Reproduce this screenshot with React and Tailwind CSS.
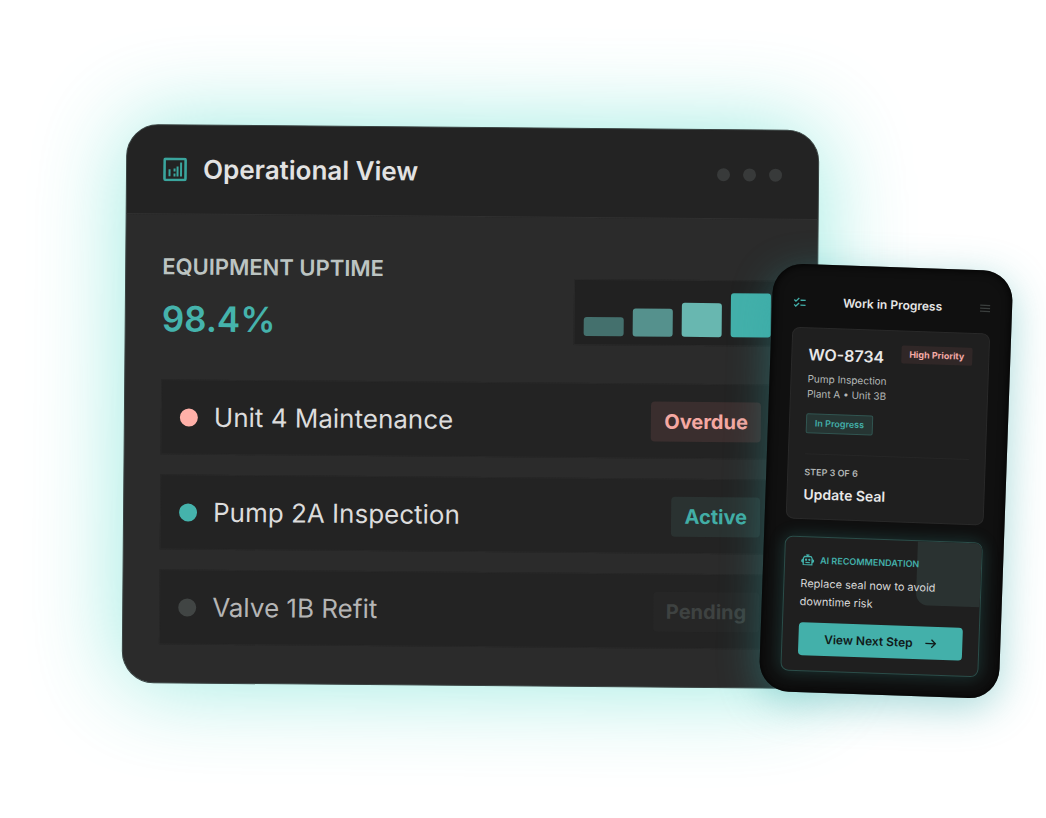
import React from 'react';

const UPTIME_BARS = [
  { id: 'q1', height: 19, tone: 'bg-[#44706d]' },
  { id: 'q2', height: 28, tone: 'bg-[#55918d]' },
  { id: 'q3', height: 34, tone: 'bg-[#68b7b0]' },
  { id: 'q4', height: 44, tone: 'bg-[#43b0aa]' },
];

const UNITS = [
  {
    name: 'Unit 4 Maintenance',
    status: 'Overdue',
    dot: 'bg-[#ffb0a8]',
    text: 'text-[#dcdcdc]',
    badge: 'bg-[#3a2e2e] text-[#f5a8a2]',
  },
  {
    name: 'Pump 2A Inspection',
    status: 'Active',
    dot: 'bg-[#45b3ac]',
    text: 'text-[#dcdcdc]',
    badge: 'bg-[#2a3231] text-[#42aea6]',
  },
  {
    name: 'Valve 1B Refit',
    status: 'Pending',
    dot: 'bg-[#414544]',
    text: 'text-[#b5b5b5]',
    badge: 'bg-[#262626] text-[#3e4241]',
  },
];

function AnalyticsIcon() {
  return (
    <svg viewBox="0 0 24 24" className="w-6 h-6 text-[#3aa59d]" fill="none" stroke="currentColor" strokeWidth="2">
      <rect x="1.5" y="1.5" width="21" height="21" rx="1" strokeWidth="2.6" />
      <path d="M6.5 12v7M11.5 16v3M11.5 11v3M14.5 9v10M18 5v14" />
    </svg>
  );
}

function ChecklistIcon() {
  return (
    <svg viewBox="0 0 24 24" className="w-[13px] h-[13px] text-[#43b0aa]" fill="none" stroke="currentColor" strokeWidth="2.4">
      <path d="M2 7l3 3 6-6M2 16l3 3 6-6M13.5 8H23M13.5 17H23" />
    </svg>
  );
}

function RobotIcon() {
  return (
    <svg viewBox="0 0 24 24" className="w-[13px] h-[13px] text-[#43b0aa]" fill="none" stroke="currentColor" strokeWidth="2.2">
      <path d="M6 6h12l2 3v12H4V9zM12 6V3M9 3h6M8 17h8" />
      <path d="M4 11L1 13v2l3 2M20 11l3 2v2l-3 2" fill="currentColor" />
      <circle cx="9" cy="12" r="1" fill="currentColor" />
      <circle cx="15" cy="12" r="1" fill="currentColor" />
    </svg>
  );
}

function OperationalCard() {
  return (
    <section className="rotate-[0.5deg] rounded-[32px] border border-[#3a4443] bg-[#2b2b2b] overflow-hidden shadow-[0_0_90px_rgba(45,212,191,0.48)]">
      {/* Header */}
      <header className="flex items-center justify-between h-[89px] px-9 bg-[#232323] border-b border-[#303030]">
        <div className="flex items-center gap-4">
          <AnalyticsIcon />
          <h1 className="text-[26px] leading-8 font-semibold text-[#e2e2e2]">Operational View</h1>
        </div>
        <div className="flex gap-[13px]">
          <span className="size-[13px] rounded-full bg-[#383a3a]" />
          <span className="size-[13px] rounded-full bg-[#383a3a]" />
          <span className="size-[13px] rounded-full bg-[#383a3a]" />
        </div>
      </header>

      <div className="px-9 pt-9 pb-[38px]">
        <div className="flex items-end justify-between">
          <div className="pb-1">
            <h2 className="text-[22px] leading-8 font-semibold text-[#bcc4c2]">EQUIPMENT UPTIME</h2>
            <p className="mt-4 text-[35px] leading-10 font-semibold text-[#45b3ac]">98.4%</p>
          </div>
          <div className="mb-px flex items-end gap-[9px] h-[66px] px-[9px] py-2 border border-[#292929] bg-[#212121]">
            {UPTIME_BARS.map((bar) => (
              <span key={bar.id} className={`w-10 rounded-[3px] ${bar.tone}`} style={{ height: bar.height }} />
            ))}
          </div>
        </div>

        {/* Unit list */}
        <ul className="mt-[37px] flex flex-col gap-5">
          {UNITS.map((unit) => (
            <li key={unit.name} className="flex items-center justify-between h-[75px] px-[18px] border border-[#282828] bg-[#232323]">
              <div className="flex items-center gap-4">
                <span className={`size-[18px] rounded-full ${unit.dot}`} />
                <span className={`text-[26px] leading-8 ${unit.text}`}>{unit.name}</span>
              </div>
              <span className={`px-[13px] text-[20px] leading-10 font-bold rounded-[4px] ${unit.badge}`}>{unit.status}</span>
            </li>
          ))}
        </ul>
      </div>
    </section>
  );
}

function PhoneCard() {
  return (
    <section className="absolute top-[267px] right-10 w-60 h-[428px] rotate-2 rounded-[30px] bg-[#101010] px-[21px] pt-5 shadow-[0_10px_40px_rgba(45,165,165,0.42),inset_0_0_10px_#000000]">
      <header className="flex items-center justify-between h-9">
        <ChecklistIcon />
        <h2 className="text-[12px] leading-4 font-semibold text-[#e6e6e6]">Work in Progress</h2>
        <button type="button" aria-label="Menu" className="text-[#3a3e3d]">
          <svg viewBox="0 0 12 12" className="size-3" fill="none" stroke="currentColor" strokeWidth="1.2">
            <path d="M1 3h10M1 6h10M1 9h10" />
          </svg>
        </button>
      </header>

      {/* Work order */}
      <article className="mt-[7px] h-[192px] rounded-lg border border-[#292929] bg-[#1f1f1f] px-4 pt-[14px]">
        <div className="flex items-start justify-between">
          <h3 className="text-[16px] leading-6 font-semibold text-[#e8e8e8]">WO-8734</h3>
          <span className="px-2 text-[9px] leading-[18px] font-bold rounded-[2px] bg-[#302727] text-[#f5aaa6]">High Priority</span>
        </div>
        <p className="mt-[5px] text-[10px] leading-[15px] text-[#b4b8b7]">
          Pump Inspection
          <br />
          Plant A • Unit 3B
        </p>
        <span className="mt-3 inline-block px-2 text-[9px] leading-[18px] font-semibold rounded-[2px] border border-[#315551] bg-[#263533] text-[#43b0aa]">
          In Progress
        </span>
        <div className="mt-5 pt-3 border-t border-[#262626]">
          <p className="text-[9px] leading-3 font-semibold text-[#b4b8b7]">STEP 3 OF 6</p>
          <p className="mt-[6px] text-[14px] leading-5 font-semibold text-[#e8e8e8]">Update Seal</p>
        </div>
      </article>

      {/* Recommendation */}
      <article className="relative mt-[17px] h-[135px] overflow-hidden rounded-lg border border-[#2b4d49] bg-[#1f1f1f] px-4 pt-4 shadow-[0_0_16px_rgba(67,176,170,0.25)]">
        <div className="absolute top-0 right-0 size-16 rounded-bl-xl bg-[#2a3231]" />
        <div className="relative flex items-center gap-[6px] text-[#43b0aa]">
          <RobotIcon />
          <h3 className="text-[9px] leading-3 font-semibold">AI RECOMMENDATION</h3>
        </div>
        <p className="relative mt-2 text-[11px] leading-[18px] text-[#d8d8d8]">
          Replace seal now to avoid downtime risk
        </p>
        <button
          type="button"
          className="mt-3 flex w-full h-[33px] items-center justify-center gap-3 rounded-[4px] bg-[#43b0aa] text-[12px] leading-4 font-semibold text-[#101a19]"
        >
          View Next Step
          <svg viewBox="0 0 12 12" className="size-3" fill="none" stroke="currentColor" strokeWidth="1.3">
            <path d="M1 6h10M7 2l4 4-4 4" />
          </svg>
        </button>
      </article>
    </section>
  );
}

export default function App() {
  return (
    <main className="relative min-h-screen overflow-hidden bg-white pt-[127px] pl-[124px] pr-[229px] pb-[127px] font-['Inter',sans-serif]">
      <OperationalCard />
      <PhoneCard />
    </main>
  );
}
